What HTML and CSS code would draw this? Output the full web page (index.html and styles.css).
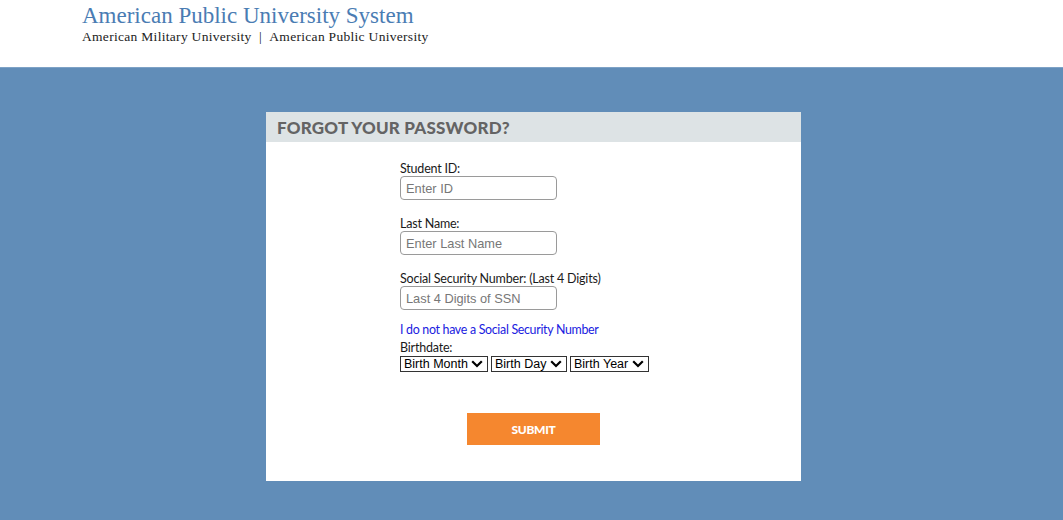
FILE: index.html
```html
<!DOCTYPE html>
<html lang="en">
<head>
<meta charset="utf-8">
<title>Forgot Your Password?</title>
<link rel="stylesheet" href="styles.css">
</head>
<body>
<header class="site-header">
  <div class="brand">
    <div class="brand-title">American Public University System</div>
    <div class="brand-sub">American Military University&nbsp; | &nbsp;American Public University</div>
  </div>
</header>
<main class="main">
  <section class="card">
    <h1 class="card-title">FORGOT YOUR PASSWORD?</h1>
    <form class="form">
      <div class="field">
        <label class="label" for="sid">Student ID:</label>
        <input class="input" id="sid" type="text" placeholder="Enter ID">
      </div>
      <div class="field">
        <label class="label" for="lname">Last Name:</label>
        <input class="input" id="lname" type="text" placeholder="Enter Last Name">
      </div>
      <div class="field">
        <label class="label" for="ssn">Social Security Number: (Last 4 Digits)</label>
        <input class="input" id="ssn" type="text" placeholder="Last 4 Digits of SSN">
      </div>
      <a class="link" href="#">I do not have a Social Security Number</a>
      <div class="birth">
        <span class="label">Birthdate:</span>
        <div class="selects">
          <span class="sel sel-month"><select><option>Birth Month</option></select><svg class="chev" viewBox="0 0 12 8" width="12" height="8"><path d="M1.2 1.2 6 6 10.8 1.2" fill="none" stroke="#000" stroke-width="2.2"/></svg></span>
          <span class="sel sel-day"><select><option>Birth Day</option></select><svg class="chev" viewBox="0 0 12 8" width="12" height="8"><path d="M1.2 1.2 6 6 10.8 1.2" fill="none" stroke="#000" stroke-width="2.2"/></svg></span>
          <span class="sel sel-year"><select><option>Birth Year</option></select><svg class="chev" viewBox="0 0 12 8" width="12" height="8"><path d="M1.2 1.2 6 6 10.8 1.2" fill="none" stroke="#000" stroke-width="2.2"/></svg></span>
        </div>
      </div>
      <div class="actions">
        <button class="submit" type="button">SUBMIT</button>
      </div>
    </form>
  </section>
</main>
</body>
</html>
```

FILE: styles.css
```css
html, body {
  margin: 0;
  padding: 0;
  height: 100%;
}
body {
  background: #618db8;
  font-family: "Lato", "Liberation Sans", sans-serif;
  display: flex;
  flex-direction: column;
}
.site-header {
  background: #fff;
  height: 68px;
  padding-left: 82px;
  box-sizing: border-box;
}
.brand {
  padding-top: 4px;
  font-family: "Liberation Serif", "Times New Roman", serif;
}
.brand-title {
  color: #4a7cb3;
  font-size: 23px;
  line-height: 24px;
}
.brand-sub {
  color: #222;
  font-size: 13.5px;
  line-height: 16px;
  margin-top: 1px;
  letter-spacing: 0.3px;
}
.main {
  flex: 1;
  padding-top: 44px;
  border-top: 1px solid #7ea2c6;
  margin-top: -1px;
}
.card {
  width: 535px;
  height: 369px;
  margin: 0 0 0 266px;
  background: #fff;
}
.card-title {
  margin: 0;
  height: 30px;
  line-height: 31px;
  background: #dde3e5;
  color: #646464;
  font-size: 17px;
  font-weight: 900;
  padding-left: 11px;
  letter-spacing: 0.2px;
}
.form {
  padding: 19px 0 0 134px;
}
.field {
  display: flex;
  flex-direction: column;
  align-items: flex-start;
  margin-bottom: 16px;
}
.label {
  font-size: 12.5px;
  line-height: 15px;
  color: #1a1a1a;
  letter-spacing: -0.2px;
}
.input {
  width: 157px;
  height: 24px;
  box-sizing: border-box;
  border: 1px solid #9a9a9a;
  border-radius: 4px;
  padding: 0 5px;
  font-family: "Liberation Sans", Arial, sans-serif;
  font-size: 12.8px;
  color: #333;
  background: #fff;
}
.input::placeholder {
  color: #777;
}
.link {
  display: block;
  color: #2020e0;
  text-decoration: none;
  font-size: 12.4px;
  line-height: 15px;
  letter-spacing: -0.3px;
  margin-top: -4px;
}
.birth {
  margin-top: 5px;
  display: flex;
  flex-direction: column;
  align-items: flex-start;
}
.birth .label {
  line-height: 12px;
}
.selects {
  display: flex;
  gap: 3px;
  margin-top: 2px;
}
.sel {
  position: relative;
  display: flex;
  height: 16px;
}
.sel select {
  appearance: none;
  -webkit-appearance: none;
  height: 16px;
  box-sizing: border-box;
  border: 1px solid #333;
  border-radius: 0;
  background: #fff;
  font-family: "Liberation Sans", Arial, sans-serif;
  font-size: 12.5px;
  line-height: 14px;
  color: #000;
  padding: 0 0 0 3px;
  margin: 0;
}
.sel-month select { width: 88px; }
.sel-day select { width: 76px; }
.sel-year select { width: 79px; }
.chev {
  position: absolute;
  right: 5px;
  top: 4px;
  pointer-events: none;
}
.actions {
  display: flex;
  justify-content: flex-start;
  padding-left: 67px;
  margin-top: 41px;
}
.submit {
  width: 133px;
  height: 32px;
  border: none;
  background: #f5872f;
  color: #fff;
  font-family: "Lato", sans-serif;
  font-weight: 900;
  font-size: 12px;
  letter-spacing: -0.3px;
  cursor: pointer;
}
```
